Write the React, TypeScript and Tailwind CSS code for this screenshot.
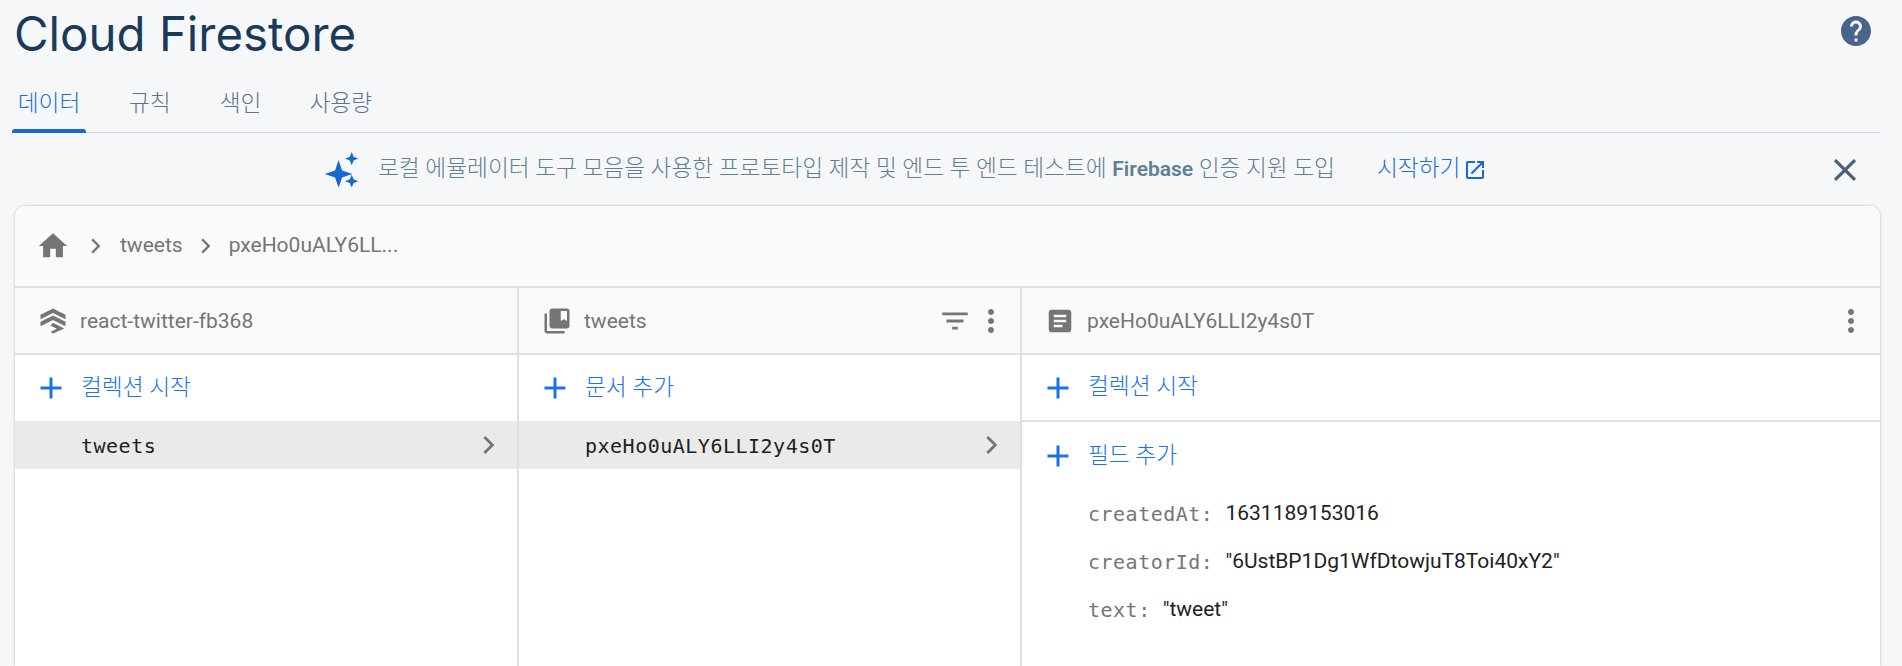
import type { ReactNode } from "react";

const KR = "font-['Roboto','Noto_Sans_CJK_KR',sans-serif]";
const MONO = "font-['DejaVu_Sans_Mono',monospace]";

const paths = {
  home: "M10 20v-6h4v6h5v-8h3L12 3 2 12h3v8z",
  chevron: "M9.4 5.6 8 7l5 5-5 5 1.4 1.4 6.4-6.4z",
  add: "M19 13h-6v6h-2v-6H5v-2h6V5h2v6h6v2z",
  close:
    "M19 6.41 17.59 5 12 10.59 6.41 5 5 6.41 10.59 12 5 17.59 6.41 19 12 13.41 17.59 19 19 17.59 13.41 12z",
  help: "M12 2C6.48 2 2 6.48 2 12s4.48 10 10 10 10-4.48 10-10S17.52 2 12 2zm1 17h-2v-2h2v2zm2.07-7.75l-.9.92C13.45 12.9 13 13.5 13 15h-2v-.5c0-1.1.45-2.1 1.17-2.83l1.24-1.26c.37-.36.59-.86.59-1.41 0-1.1-.9-2-2-2s-2 .9-2 2H8c0-2.21 1.79-4 4-4s4 1.79 4 4c0 .88-.36 1.68-.93 2.25z",
  open: "M19 19H5V5h7V3H5c-1.11 0-2 .9-2 2v14c0 1.1.89 2 2 2h14c1.1 0 2-.9 2-2v-7h-2v7zM14 3v2h3.59l-9.83 9.83 1.41 1.41L19 6.41V10h2V3h-7z",
  collection:
    "M4 6H2v14c0 1.1.9 2 2 2h14v-2H4V6zm16-4H8c-1.1 0-2 .9-2 2v12c0 1.1.9 2 2 2h12c1.1 0 2-.9 2-2V4c0-1.1-.9-2-2-2zm0 10l-2.5-1.5L15 12V4h5v8z",
  doc: "M19 3H5c-1.1 0-2 .9-2 2v14c0 1.1.9 2 2 2h14c1.1 0 2-.9 2-2V5c0-1.1-.9-2-2-2zm-5 14H7v-2h7v2zm3-4H7v-2h10v2zm0-4H7V7h10v2z",
  filter: "M10 18h4v-2h-4v2zM3 6v2h18V6H3zm3 7h12v-2H6v2z",
  more: "M12 8c1.1 0 2-.9 2-2s-.9-2-2-2-2 .9-2 2 .9 2 2 2zm0 2c-1.1 0-2 .9-2 2s.9 2 2 2 2-.9 2-2-.9-2-2-2zm0 6c-1.1 0-2 .9-2 2s.9 2 2 2 2-.9 2-2-.9-2-2-2z",
  db: "M12 2 2 7v3.6l10-5 10 5V7zM2 12.6v3.6l10-5 10 5v-3.6l-10-5zM12 13.4 21 18l-9 4-2-1.2 5-2.6-5-2.6z",
  spark:
    "M10 5.5 12.4 12.6 19.5 15 12.4 17.4 10 24.5 7.6 17.4.5 15 7.6 12.6zM19 0l1.3 3.2L23.5 4.5 20.3 5.8 19 9 17.7 5.8 14.5 4.5 17.7 3.2zM19 15.5l1.3 3.2 3.2 1.3-3.2 1.3-1.3 3.2-1.3-3.2-3.2-1.3 3.2-1.3z",
};

const Icon = ({ d, className }: { d: string; className: string }) => (
  <svg viewBox="0 0 24 24" fill="currentColor" className={className}>
    <path d={d} />
  </svg>
);

const AddRow = ({ label, className = "" }: { label: string; className?: string }) => (
  <div className={`flex items-center pl-[18px] text-[#1a73e8] ${className}`}>
    <Icon d={paths.add} className="h-[36px] w-[36px]" />
    <span className={`ml-[12px] text-[22.7px] font-light ${KR}`}>{label}</span>
  </div>
);

const ColHead = ({ icon, label, children }: { icon: string; label: string; children?: ReactNode }) => (
  <div className="flex h-[67px] items-center border-b-2 border-[#e0e0e0] bg-[#fafafa] pl-[23px] pr-[11px] pt-[1px] text-[#757575]">
    <Icon d={icon} className="h-[30px] w-[30px]" />
    <span className="ml-[12px] grow pt-[1px] font-['Roboto',sans-serif] text-[21px]">{label}</span>
    {children}
  </div>
);

const Item = ({ label, pad }: { label: string; pad: string }) => (
  <div className={`flex h-[48px] items-center bg-[#eaeaea] ${pad} pr-[11px]`}>
    <span className={`grow pt-[1px] ${MONO} text-[20px] tracking-[0.5px] text-[#212121]`}>{label}</span>
    <Icon d={paths.chevron} className="h-[34px] w-[34px] text-[#757575]" />
  </div>
);

const Field = ({ name, value }: { name: string; value: string }) => (
  <div className="flex h-[48px] items-center">
    <span className={`${MONO} text-[20px] tracking-[0.5px] text-[#757575]`}>{name}</span>
    <span className="ml-[12px] font-['Roboto',sans-serif] text-[21px] text-[#212121]">{value}</span>
  </div>
);

export default function App() {
  return (
    <div className="h-[666px] overflow-hidden bg-[#f6f7f9]">
      <div className="flex items-start justify-between pl-[14px] pr-[28px]">
        <h1 className="pt-[7px] font-['Inter',sans-serif] text-[47.4px] leading-[54px] text-[#1a3a5c]">
          Cloud Firestore
        </h1>
        <Icon d={paths.help} className="mt-[13px] h-[36px] w-[36px] text-[#48648a]" />
      </div>

      <div className={`ml-[12px] mr-[22px] flex h-[72px] border-b border-[#c5d3e6] pt-[16px] ${KR} text-[22.7px] font-light text-[#5a7390]`}>
        <div className="relative flex w-[74px] items-center justify-center text-[#1a6fdc]">
          데이터
          <div className="absolute bottom-[-1px] h-[4px] w-full rounded-t-[3px] bg-[#1967d2]" />
        </div>
        <div className="ml-[43px] flex items-center">규칙</div>
        <div className="ml-[49px] flex items-center">색인</div>
        <div className="ml-[48px] flex items-center">사용량</div>
      </div>

      <div className={`flex h-[73px] items-center pl-[324px] pr-[38px] ${KR} text-[22.7px] font-light text-[#5f7f93]`}>
        <Icon d={paths.spark} className="h-[35px] w-[35px] text-[#1967d2]" />
        <span className="ml-[19px]">
          로컬 에뮬레이터 도구 모음을 사용한 프로토타입 제작 및 엔드 투 엔드 테스트에{" "}
          <span className="text-[21px] font-semibold">Firebase</span> 인증 지원 도입
        </span>
        <span className="ml-[42px] text-[#1a6fdc]">시작하기</span>
        <Icon d={paths.open} className="ml-[3px] h-[24px] w-[24px] text-[#1967d2]" />
        <Icon d={paths.close} className="ml-auto h-[38px] w-[38px] text-[#48607c]" />
      </div>

      <div className="ml-[15px] mr-[22px] h-[461px] overflow-hidden rounded-t-[10px] bg-white shadow-[0_0_3px_rgba(0,0,0,0.25)]">
        <div className="flex h-[82px] items-center border-b-2 border-[#e0e0e0] bg-[#fafafa] pl-[21px] font-['Roboto',sans-serif] text-[21px] text-[#757575]">
          <Icon d={paths.home} className="h-[34px] w-[34px]" />
          <Icon d={paths.chevron} className="ml-[12px] h-[28px] w-[28px]" />
          <span className="ml-[10px]">tweets</span>
          <Icon d={paths.chevron} className="ml-[9px] h-[28px] w-[28px]" />
          <span className="ml-[9px]">pxeHo0uALY6LL...</span>
        </div>
        <div className="grid h-full grid-cols-[504px_503px_1fr]">
          <div className="border-r-2 border-[#e0e0e0]">
            <ColHead icon={paths.db} label="react-twitter-fb368" />
            <AddRow label="컬렉션 시작" className="h-[66px]" />
            <Item label="tweets" pad="pl-[66px]" />
          </div>
          <div className="border-r-2 border-[#e0e0e0]">
            <ColHead icon={paths.collection} label="tweets">
              <Icon d={paths.filter} className="h-[34px] w-[34px]" />
              <Icon d={paths.more} className="ml-[1px] h-[36px] w-[36px]" />
            </ColHead>
            <AddRow label="문서 추가" className="h-[66px]" />
            <Item label="pxeHo0uALY6LLI2y4s0T" pad="pl-[66px]" />
          </div>
          <div>
            <ColHead icon={paths.doc} label="pxeHo0uALY6LLI2y4s0T">
              <Icon d={paths.more} className="h-[36px] w-[36px]" />
            </ColHead>
            <AddRow label="컬렉션 시작" className="h-[67px] border-b-2 border-[#e0e0e0]" />
            <AddRow label="필드 추가" className="h-[68px]" />
            <div className="pl-[66px]">
              <Field name="createdAt:" value="1631189153016" />
              <Field name="creatorId:" value={'"6UstBP1Dg1WfDtowjuT8Toi40xY2"'} />
              <Field name="text:" value={'"tweet"'} />
            </div>
          </div>
        </div>
      </div>
    </div>
  );
}
